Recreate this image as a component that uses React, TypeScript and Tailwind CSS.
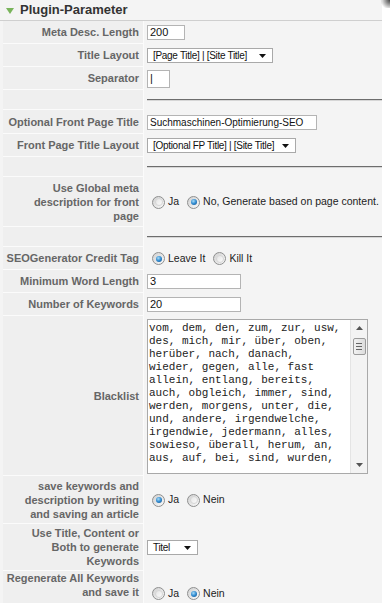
import React from 'react';

const blacklist = [
  'vom, dem, den, zum, zur, usw,',
  'des, mich, mir, über, oben,',
  'herüber, nach, danach,',
  'wieder, gegen, alle, fast',
  'allein, entlang, bereits,',
  'auch, obgleich, immer, sind,',
  'werden, morgens, unter, die,',
  'und, andere, irgendwelche,',
  'irgendwie, jedermann, alles,',
  'sowieso, überall, herum, an,',
  'aus, auf, bei, sind, wurden,',
];

function Row({ label, h, children, top }: { label: string[]; h: string; children?: React.ReactNode; top?: boolean }) {
  return (
    <div className={`flex ${h}`}>
      <div
        className={`w-[141px] shrink-0 bg-[#efefef] border-b border-r border-[#fbfbfb] flex justify-end pr-[4px] text-right text-[11px] leading-[14px] font-bold text-[#666] whitespace-nowrap ${top ? 'items-start' : 'items-center'}`}
      >
        <div>
          {label.map((l, i) => (
            <div key={i}>{l}</div>
          ))}
        </div>
      </div>
      <div className={`flex-1 flex pl-[3px] ${top ? 'items-start pt-[15px]' : 'items-center'}`}>{children}</div>
    </div>
  );
}

function Radio({ on }: { on?: boolean }) {
  return (
    <span className="w-[13px] h-[13px] rounded-full border border-[#8e8f8f] bg-gradient-to-br from-[#d0d0d0] to-[#fbfbfb] flex items-center justify-center shrink-0">
      <span
        className={`rounded-full ${on ? 'w-[6px] h-[6px] bg-[radial-gradient(circle_at_40%_35%,#a8dcf7,#2f8ad0_50%,#154c82)]' : 'w-[8px] h-[8px] bg-gradient-to-br from-[#e6e6e6] to-[#fafafa] border border-[#d6d6d6]'}`}
      />
    </span>
  );
}

function RadioGroup({ items, active }: { items: string[]; active: number }) {
  return (
    <div className="flex items-center text-[#222] ml-[5px]">
      {items.map((t, i) => (
        <div key={t} className={`flex items-center ${i > 0 ? 'ml-[8px]' : ''}`}>
          <Radio on={i === active} />
          <span className="ml-[3px] whitespace-nowrap text-[10.5px]">{t}</span>
        </div>
      ))}
    </div>
  );
}

function Select({ text, w }: { text: string; w: string }) {
  return (
    <div className={`${w} h-[15px] bg-white border border-[#a9a9a9] flex items-center justify-between pl-[5px] pr-[6px]`}>
      <span className="text-[10px] tracking-[-0.3px] text-[#111] whitespace-nowrap">{text}</span>
      <svg width="7" height="4" viewBox="0 0 7 4">
        <path d="M0 0h7L3.5 4z" fill="#111" />
      </svg>
    </div>
  );
}

function Input({ value, w, h = 'h-[15px]', small }: { value: string; w: string; h?: string; small?: boolean }) {
  return (
    <div className={`${w} ${h} bg-white border border-[#b4b4b4] flex items-center pl-[2px] ${small ? 'text-[10px]' : 'text-[11px]'} text-[#111] whitespace-nowrap`}>
      {value}
    </div>
  );
}

function Rule() {
  return <div className="w-full h-[2px] border-t border-[#6d6d6d] border-b border-b-[#d6d6d6]" />;
}

export default function App() {
  return (
    <div className="relative w-[390px] h-[603px] bg-white overflow-hidden font-['Liberation_Sans',Arial,sans-serif]">
      <div className="absolute top-0 right-0 w-[10px] h-[8px] bg-[radial-gradient(circle_at_100%_0%,#444,transparent_75%)]" />
      <div className="w-[382px] h-full bg-[#f4f4f4] pl-[3px]">
        <div className="h-[21px] -ml-[3px] pl-[6px] flex items-center border-b border-[#cfcfcf]">
          <svg width="8" height="6" viewBox="0 0 8 6" className="mt-[1px]">
            <path d="M0 0h8L4 6z" fill="#79b45b" />
          </svg>
          <span className="ml-[6px] text-[13px] font-bold text-[#333]">Plugin-Parameter</span>
        </div>

        <Row label={['Meta Desc. Length']} h="h-[23px]">
          <Input value="200" w="w-[38px]" />
        </Row>
        <Row label={['Title Layout']} h="h-[23px]">
          <Select text="[Page Title] | [Site Title]" w="w-[126px]" />
        </Row>
        <Row label={['Separator']} h="h-[23px]">
          <Input value="|" w="w-[23px]" h="h-[18px]" />
        </Row>
        <Row label={['']} h="h-[20px]">
          <Rule />
        </Row>
        <Row label={['Optional Front Page Title']} h="h-[24px]">
          <Input value="Suchmaschinen-Optimierung-SEO" w="w-[170px]" small />
        </Row>
        <Row label={['Front Page Title Layout']} h="h-[23px]">
          <Select text="[Optional FP Title] | [Site Title]" w="w-[149px]" />
        </Row>
        <Row label={['']} h="h-[20px]">
          <Rule />
        </Row>
        <Row label={['Use Global meta', 'description for front', 'page']} h="h-[50px]">
          <RadioGroup items={['Ja', 'No, Generate based on page content.']} active={1} />
        </Row>
        <Row label={['']} h="h-[20px]">
          <Rule />
        </Row>
        <Row label={['SEOGenerator Credit Tag']} h="h-[23px]">
          <RadioGroup items={['Leave It', 'Kill It']} active={0} />
        </Row>
        <Row label={['Minimum Word Length']} h="h-[23px]">
          <Input value="3" w="w-[94px]" />
        </Row>
        <Row label={['Number of Keywords']} h="h-[23px]">
          <Input value="20" w="w-[94px]" />
        </Row>
        <Row label={['Blacklist']} h="h-[160px]">
          <div className="w-[221px] h-[155px] bg-white border border-[#a9a9a9] flex">
            <div className="flex-1 pl-[1px] pt-[2px] font-['Liberation_Mono','Courier_New',monospace] text-[11px] leading-[13px] text-[#222] whitespace-pre overflow-hidden">
              {blacklist.map((l) => (
                <div key={l}>{l}</div>
              ))}
            </div>
            <div className="w-[17px] h-full bg-[#f3f3f3] border-l border-[#e4e4e4] flex flex-col items-center">
              <svg width="7" height="4" viewBox="0 0 7 4" className="mt-[6px]">
                <path d="M0 4h7L3.5 0z" fill="#555" />
              </svg>
              <div className="mt-[8px] w-[13px] h-[17px] rounded-[2px] border border-[#9b9b9b] bg-gradient-to-r from-[#f2f2f2] to-[#dcdcdc] flex flex-col items-center justify-center gap-[2px]">
                <div className="w-[6px] h-px bg-[#666]" />
                <div className="w-[6px] h-px bg-[#666]" />
                <div className="w-[6px] h-px bg-[#666]" />
              </div>
              <div className="flex-1" />
              <svg width="7" height="4" viewBox="0 0 7 4" className="mb-[6px]">
                <path d="M0 0h7L3.5 4z" fill="#555" />
              </svg>
            </div>
          </div>
        </Row>
        <Row label={['save keywords and', 'description by writing', 'and saving an article']} h="h-[48px]">
          <RadioGroup items={['Ja', 'Nein']} active={0} />
        </Row>
        <Row label={['Use Title, Content or', 'Both to generate', 'Keywords']} h="h-[47px]">
          <Select text="Titel" w="w-[51px]" />
        </Row>
        <Row label={['Regenerate All Keywords', 'and save it']} h="h-[40px]" top>
          <RadioGroup items={['Ja', 'Nein']} active={1} />
        </Row>
      </div>
    </div>
  );
}
